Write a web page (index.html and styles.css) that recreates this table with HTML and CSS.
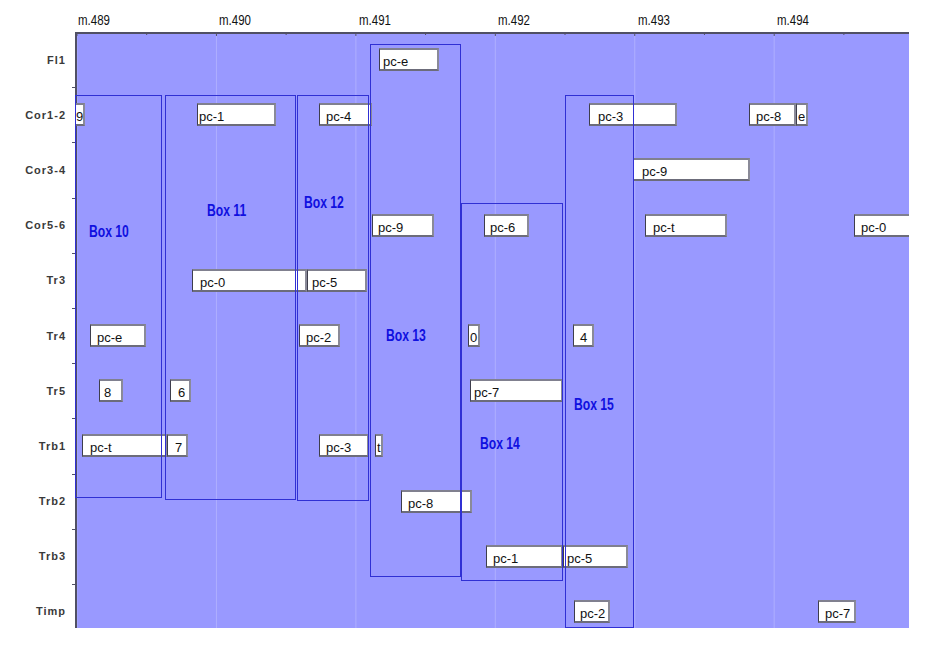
FILE: index.html
```html
<!DOCTYPE html>
<html>
<head>
<meta charset="utf-8">
<title>Score boxes</title>
<link rel="stylesheet" href="styles.css">
</head>
<body>
<div class="chart">
  <div class="corner"></div>
  <div class="axis-top">
    <div class="measure"><span>m.489</span></div>
    <div class="measure"><span>m.490</span></div>
    <div class="measure"><span>m.491</span></div>
    <div class="measure"><span>m.492</span></div>
    <div class="measure"><span>m.493</span></div>
    <div class="measure"><span>m.494</span></div>
  </div>
  <div class="row-labels">
    <div class="rowlabel">Fl1</div>
    <div class="rowlabel">Cor1-2</div>
    <div class="rowlabel">Cor3-4</div>
    <div class="rowlabel">Cor5-6</div>
    <div class="rowlabel">Tr3</div>
    <div class="rowlabel">Tr4</div>
    <div class="rowlabel">Tr5</div>
    <div class="rowlabel">Trb1</div>
    <div class="rowlabel">Trb2</div>
    <div class="rowlabel">Trb3</div>
    <div class="rowlabel">Timp</div>
  </div>
  <div class="plot">
    <div class="lane">
      <div class="note" style="left:304px;width:60px;padding-left:3px">pc-e</div>
    </div>
    <div class="lane">
      <div class="note" style="left:0px;width:10px;padding-left:0px">9</div>
      <div class="note" style="left:122px;width:79px;padding-left:1px">pc-1</div>
      <div class="note" style="left:244px;width:53px;padding-left:6px">pc-4</div>
      <div class="note" style="left:514px;width:88px;padding-left:8px">pc-3</div>
      <div class="note" style="left:674px;width:47px;padding-left:6px">pc-8</div>
      <div class="note" style="left:721px;width:12px;padding-left:1px">e</div>
    </div>
    <div class="lane">
      <div class="note" style="left:558px;width:117px;padding-left:8px">pc-9</div>
    </div>
    <div class="lane">
      <div class="note" style="left:297px;width:62px;padding-left:5px">pc-9</div>
      <div class="note" style="left:409px;width:45px;padding-left:5px">pc-6</div>
      <div class="note" style="left:570px;width:82px;padding-left:7px">pc-t</div>
      <div class="note" style="left:779px;width:70px;padding-left:6px">pc-0</div>
    </div>
    <div class="lane">
      <div class="note" style="left:117px;width:115px;padding-left:7px">pc-0</div>
      <div class="note" style="left:232px;width:60px;padding-left:4px">pc-5</div>
    </div>
    <div class="lane">
      <div class="note" style="left:15px;width:56px;padding-left:6px">pc-e</div>
      <div class="note" style="left:224px;width:41px;padding-left:6px">pc-2</div>
      <div class="note" style="left:393px;width:12px;padding-left:1px">0</div>
      <div class="note" style="left:498px;width:21px;padding-left:6px">4</div>
    </div>
    <div class="lane">
      <div class="note" style="left:24px;width:24px;padding-left:4px">8</div>
      <div class="note" style="left:95px;width:21px;padding-left:7px">6</div>
      <div class="note" style="left:395px;width:93px;padding-left:3px">pc-7</div>
    </div>
    <div class="lane">
      <div class="note" style="left:7px;width:85px;padding-left:7px">pc-t</div>
      <div class="note" style="left:92px;width:21px;padding-left:7px">7</div>
      <div class="note" style="left:244px;width:50px;padding-left:6px">pc-3</div>
      <div class="note" style="left:300px;width:8px;padding-left:1px">t</div>
    </div>
    <div class="lane">
      <div class="note" style="left:326px;width:71px;padding-left:6px">pc-8</div>
    </div>
    <div class="lane">
      <div class="note" style="left:411px;width:77px;padding-left:6px">pc-1</div>
      <div class="note" style="left:488px;width:65px;padding-left:3px">pc-5</div>
    </div>
    <div class="lane">
      <div class="note" style="left:499px;width:36px;padding-left:5px">pc-2</div>
      <div class="note" style="left:743px;width:38px;padding-left:6px">pc-7</div>
    </div>

    <div class="box" style="left:0px;top:63px;width:87px;height:403px;padding:127px 0 0 13px"><span class="box-label">Box 10</span></div>
    <div class="box" style="left:90px;top:63px;width:131px;height:405px;padding:106px 0 0 41px"><span class="box-label">Box 11</span></div>
    <div class="box" style="left:222px;top:63px;width:72px;height:406px;padding:98px 0 0 6px"><span class="box-label">Box 12</span></div>
    <div class="box" style="left:295px;top:12px;width:91px;height:533px;padding:282px 0 0 15px"><span class="box-label">Box 13</span></div>
    <div class="box" style="left:386px;top:171px;width:102px;height:378px;padding:231px 0 0 18px"><span class="box-label">Box 14</span></div>
    <div class="box" style="left:490px;top:63px;width:69px;height:533px;padding:300px 0 0 8px"><span class="box-label">Box 15</span></div>
  </div>
</div>
</body>
</html>
```
FILE: styles.css
```css
* { box-sizing: border-box; }

html, body {
  margin: 0;
  padding: 0;
  background: #ffffff;
}

body {
  font-family: "Liberation Sans", Arial, sans-serif;
  color: #222;
}

.chart {
  display: grid;
  grid-template-columns: 75px 834px;
  grid-template-rows: 32px 596px;
  width: 909px;
}

.axis-top {
  display: flex;
  padding-left: 1.5px;
}

.measure {
  flex: none;
  width: 139.45px;
  padding-top: 12px;
  padding-left: 3.5px;
  font-size: 14px;
  line-height: 16px;
  color: #111;
  white-space: nowrap;
}

.measure:first-child {
  padding-left: 1px;
}

.measure span {
  display: inline-block;
  transform: scaleX(0.82);
  transform-origin: left top;
}

.row-labels {
  display: flex;
  flex-direction: column;
}

.rowlabel {
  flex: none;
  height: 55.2px;
  display: flex;
  align-items: center;
  justify-content: flex-end;
  padding-right: 9px;
  font-size: 11px;
  font-weight: bold;
  letter-spacing: 1px;
  color: #3a3a3a;
  background: linear-gradient(#505064, #505064) no-repeat right 0 top 0 / 3px 1px;
}

.rowlabel:first-child {
  background: none;
}

.plot {
  position: relative;
  overflow: hidden;
  background-color: #9999ff;
  background-image:
    linear-gradient(to right, #505064 0 1px, transparent 1px),
    linear-gradient(to right, #505064 0 1px, transparent 1px),
    linear-gradient(to right, #aeaeff 0 1px, transparent 1px);
  background-size: 139.45px 4px, 139.45px 3px, 139.45px 100%;
  background-position: 1.5px 0, 71.2px 0, 1.5px 0;
  background-repeat: repeat-x;
  box-shadow: inset 2px 2px 0 #505064;
}

.lane {
  position: relative;
  height: 55.2px;
}

.note {
  position: absolute;
  top: 16px;
  height: 23px;
  padding-top: 4px;
  background: #ffffff;
  border-style: solid;
  border-width: 2px 2px 2px 1px;
  border-color: #80808f #8a8a98 #6c6c7a #3e3e4c;
  font-size: 13px;
  line-height: 15px;
  color: #111;
  white-space: nowrap;
  overflow: hidden;
}

.box {
  position: absolute;
  border: 1px solid #3030d4;
}

.box-label {
  display: inline-block;
  font-size: 16px;
  line-height: 16px;
  font-weight: bold;
  color: #1010e0;
  white-space: nowrap;
  transform: scaleX(0.76);
  transform-origin: left top;
}
```
